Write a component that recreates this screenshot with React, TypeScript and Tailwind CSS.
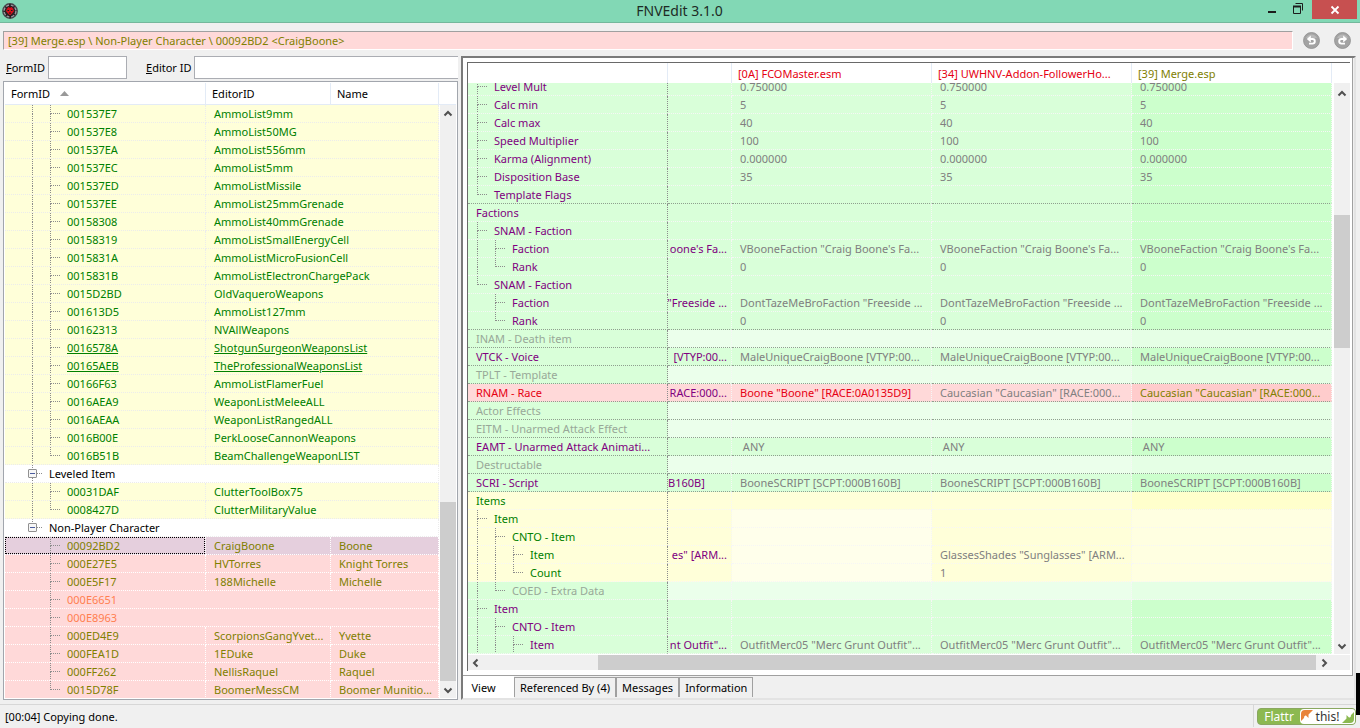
import { clsx } from "clsx";
import type { ReactNode } from "react";

type GuideKind = "none" | "line" | "tee" | "end";

type TreeRow = {
  id: string;
  editor?: string;
  name?: string;
  tone: "added" | "conflict" | "deleted" | "selected" | "group";
  last?: boolean;
  underline?: boolean;
};

const added = (id: string, editor: string, extra: Partial<TreeRow> = {}): TreeRow => ({
  id,
  editor,
  tone: "added",
  ...extra,
});

const conflict = (id: string, editor: string, name: string, extra: Partial<TreeRow> = {}): TreeRow => ({
  id,
  editor,
  name,
  tone: "conflict",
  ...extra,
});

const TREE: TreeRow[] = [
  added("001537E7", "AmmoList9mm"),
  added("001537E8", "AmmoList50MG"),
  added("001537EA", "AmmoList556mm"),
  added("001537EC", "AmmoList5mm"),
  added("001537ED", "AmmoListMissile"),
  added("001537EE", "AmmoList25mmGrenade"),
  added("00158308", "AmmoList40mmGrenade"),
  added("00158319", "AmmoListSmallEnergyCell"),
  added("0015831A", "AmmoListMicroFusionCell"),
  added("0015831B", "AmmoListElectronChargePack"),
  added("0015D2BD", "OldVaqueroWeapons"),
  added("001613D5", "AmmoList127mm"),
  added("00162313", "NVAllWeapons"),
  added("0016578A", "ShotgunSurgeonWeaponsList", { underline: true }),
  added("00165AEB", "TheProfessionalWeaponsList", { underline: true }),
  added("00166F63", "AmmoListFlamerFuel"),
  added("0016AEA9", "WeaponListMeleeALL"),
  added("0016AEAA", "WeaponListRangedALL"),
  added("0016B00E", "PerkLooseCannonWeapons"),
  added("0016B51B", "BeamChallengeWeaponLIST", { last: true }),
  { id: "Leveled Item", tone: "group" },
  added("00031DAF", "ClutterToolBox75"),
  added("0008427D", "ClutterMilitaryValue", { last: true }),
  { id: "Non-Player Character", tone: "group", last: true },
  conflict("00092BD2", "CraigBoone", "Boone", { tone: "selected" }),
  conflict("000E27E5", "HVTorres", "Knight Torres"),
  conflict("000E5F17", "188Michelle", "Michelle"),
  { id: "000E6651", tone: "deleted" },
  { id: "000E8963", tone: "deleted" },
  conflict("000ED4E9", "ScorpionsGangYvet...", "Yvette"),
  conflict("000FEA1D", "1EDuke", "Duke"),
  conflict("000FF262", "NellisRaquel", "Raquel"),
  conflict("0015D78F", "BoomerMessCM", "Boomer Munitio...", { last: true }),
];

const TREE_TONE = {
  added: "bg-[#ffffd9] text-[#008000]",
  conflict: "bg-[#ffd9d9] text-[#808000]",
  deleted: "bg-[#ffd9d9] text-[#ff7f50]",
  selected: "bg-[#e5cfdd] text-[#808000]",
  group: "bg-white text-black",
};

type Fill = "green" | "empty" | "red" | "yellow" | "yellowEmpty";

type RecordRow = {
  label: string;
  guides?: GuideKind[];
  labelFill?: Fill;
  fills?: [Fill, Fill, Fill, Fill];
  tone?: "normal" | "missing" | "red" | "green";
  cells?: [string, string, string, string];
};

const G: [Fill, Fill, Fill, Fill] = ["green", "green", "green", "green"];
const E: [Fill, Fill, Fill, Fill] = ["empty", "empty", "empty", "empty"];
const Y: [Fill, Fill, Fill, Fill] = ["yellow", "yellowEmpty", "yellow", "yellowEmpty"];

const same = (text: string, clipped = ""): [string, string, string, string] => [clipped, text, text, text];

const RECORD: RecordRow[] = [
  { label: "Level Mult", guides: ["tee"], cells: same("0.750000") },
  { label: "Calc min", guides: ["tee"], cells: same("5") },
  { label: "Calc max", guides: ["tee"], cells: same("40") },
  { label: "Speed Multiplier", guides: ["tee"], cells: same("100") },
  { label: "Karma (Alignment)", guides: ["tee"], cells: same("0.000000") },
  { label: "Disposition Base", guides: ["tee"], cells: same("35") },
  { label: "Template Flags", guides: ["end"] },
  { label: "Factions" },
  { label: "SNAM - Faction", guides: ["tee"] },
  {
    label: "Faction",
    guides: ["line", "tee"],
    cells: same("VBooneFaction \"Craig Boone's Fa...", "oone's Fa..."),
  },
  { label: "Rank", guides: ["line", "end"], cells: same("0") },
  { label: "SNAM - Faction", guides: ["end"] },
  {
    label: "Faction",
    guides: ["none", "tee"],
    cells: same("DontTazeMeBroFaction \"Freeside ...", "\"Freeside ..."),
  },
  { label: "Rank", guides: ["none", "end"], cells: same("0") },
  { label: "INAM - Death item", tone: "missing", fills: E },
  { label: "VTCK - Voice", cells: same("MaleUniqueCraigBoone [VTYP:00...", "[VTYP:00...") },
  { label: "TPLT - Template", tone: "missing", fills: E },
  {
    label: "RNAM - Race",
    tone: "red",
    labelFill: "red",
    fills: ["red", "red", "red", "red"],
    cells: [
      "RACE:000...",
      "Boone \"Boone\" [RACE:0A0135D9]",
      "Caucasian \"Caucasian\" [RACE:000...",
      "Caucasian \"Caucasian\" [RACE:000...",
    ],
  },
  { label: "Actor Effects", tone: "missing", fills: E },
  { label: "EITM - Unarmed Attack Effect", tone: "missing", fills: E },
  { label: "EAMT - Unarmed Attack Animati...", cells: same("\u00a0ANY") },
  { label: "Destructable", tone: "missing", fills: E },
  { label: "SCRI - Script", cells: same("BooneSCRIPT [SCPT:000B160B]", "B160B]") },
  { label: "Items", tone: "green", labelFill: "yellow", fills: ["yellow", "yellow", "yellow", "yellow"] },
  { label: "Item", tone: "green", guides: ["tee"], labelFill: "yellow", fills: Y },
  { label: "CNTO - Item", tone: "green", guides: ["line", "tee"], labelFill: "yellow", fills: Y },
  {
    label: "Item",
    tone: "green",
    guides: ["line", "line", "tee"],
    labelFill: "yellow",
    fills: Y,
    cells: ["es\" [ARM...", "", "GlassesShades \"Sunglasses\" [ARM...", ""],
  },
  {
    label: "Count",
    tone: "green",
    guides: ["line", "line", "end"],
    labelFill: "yellow",
    fills: Y,
    cells: ["", "", "1", ""],
  },
  { label: "COED - Extra Data", tone: "missing", guides: ["line", "end"], fills: E },
  { label: "Item", guides: ["tee"] },
  { label: "CNTO - Item", guides: ["line", "tee"] },
  {
    label: "Item",
    guides: ["line", "line", "tee"],
    cells: same("OutfitMerc05 \"Merc Grunt Outfit\"...", "nt Outfit\"..."),
  },
];

const FILL: Record<Fill, string> = {
  green: "bg-[#d9ffd9]",
  empty: "bg-[#ebffeb]",
  red: "bg-[#ffd9d9]",
  yellow: "bg-[#ffffd9]",
  yellowEmpty: "bg-[#ffffeb]",
};

// the last plugin column is a shade darker
const FILL_ACTIVE: Record<Fill, string> = {
  green: "bg-[#ccffcc]",
  empty: "bg-[#e5ffe5]",
  red: "bg-[#ffcccc]",
  yellow: "bg-[#ffffcc]",
  yellowEmpty: "bg-[#ffffe1]",
};

const LABEL_TONE = {
  normal: "text-[#800080]",
  missing: "text-[#98a898]",
  red: "text-[#e60012]",
  green: "text-[#008000]",
};

function Guide({ kind, children }: { kind: GuideKind; children?: ReactNode }) {
  return (
    <span className="relative -mb-px flex h-[18px] w-[18px] shrink-0 flex-col pl-px">
      {kind !== "none" && (
        <>
          <span
            className={clsx(
              "h-[9px] w-[10px] border-l border-dotted border-[#8c8c8c]",
              kind !== "line" && "border-b"
            )}
          />
          {kind !== "end" && <span className="h-[9px] border-l border-dotted border-[#8c8c8c]" />}
        </>
      )}
      {children}
    </span>
  );
}

function Chevron({ dir }: { dir: "up" | "down" | "left" | "right" }) {
  const d = {
    up: "M1.5 6.5 5 3l3.5 3.5",
    down: "M1.5 3.5 5 7l3.5-3.5",
    left: "M6.5 1.5 3 5l3.5 3.5",
    right: "M3.5 1.5 7 5 3.5 8.5",
  }[dir];
  return (
    <svg width="10" height="10" viewBox="0 0 10 10" fill="none" stroke="#505050" strokeWidth="2">
      <path d={d} />
    </svg>
  );
}

function ScrollButton({ dir, label }: { dir: "up" | "down" | "left" | "right"; label: string }) {
  const vertical = dir === "up" || dir === "down";
  return (
    <button
      type="button"
      aria-label={label}
      className={clsx("flex w-4 shrink-0 items-center justify-center", vertical ? "h-[17px]" : "h-[15px]")}
    >
      <Chevron dir={dir} />
    </button>
  );
}

function TreeTable() {
  return (
    <table className="w-full table-fixed border-separate border-spacing-0">
      <colgroup>
        <col className="w-[201px]" />
        <col className="w-[125px]" />
        <col />
      </colgroup>
      <tbody>
        {TREE.map((row) => {
          const inset = row.tone === "conflict" || row.tone === "selected" || row.tone === "deleted";
          const cell = clsx(
            "h-[18px] overflow-hidden border-b border-r border-dotted p-0 whitespace-nowrap",
            inset ? "border-white" : "border-[#ececec]"
          );
          const group = row.tone === "group";
          return (
            <tr key={row.id} className={clsx(TREE_TONE[row.tone], row.underline && "underline")}>
              <td colSpan={row.editor ? 1 : 3} className={cell}>
                <div
                  className={clsx(
                    "flex h-[17px] items-center pl-[26px]",
                    row.tone === "selected" && "outline-1 -outline-offset-1 outline-dotted outline-black"
                  )}
                >
                  {group ? (
                    <Guide kind={row.last ? "end" : "tee"}>
                      <button
                        type="button"
                        aria-label={`Collapse ${row.id}`}
                        className="absolute top-1 -left-[3px] flex h-[9px] w-[9px] items-center justify-center rounded-[1px] border border-[#919191] bg-[#f6f6f6]"
                      >
                        <span className="h-px w-[5px] bg-[#4b5c9e]" />
                      </button>
                    </Guide>
                  ) : (
                    <>
                      <Guide kind={inset ? "none" : "line"} />
                      <Guide kind={row.last ? "end" : "tee"} />
                    </>
                  )}
                  <span>{row.id}</span>
                </div>
              </td>
              {row.editor && (
                <td colSpan={row.name ? 1 : 2} className={clsx(cell, "pl-2")}>
                  {row.editor}
                </td>
              )}
              {row.name && <td className={clsx(cell, "pl-2")}>{row.name}</td>}
            </tr>
          );
        })}
      </tbody>
    </table>
  );
}

function RecordTable() {
  return (
    <table className="-mt-[5px] w-full table-fixed border-separate border-spacing-0">
      <colgroup>
        <col className="w-[200px]" />
        <col className="w-16" />
        <col />
        <col />
        <col />
      </colgroup>
      <tbody>
        {RECORD.map((row, i) => {
          const next = RECORD[i + 1];
          const line = next && !next.guides ? "border-b-[#8fa08f]" : "border-b-[#f6f6f6]";
          const base = clsx("h-[18px] overflow-hidden border-b border-r border-dotted p-0 whitespace-nowrap", line);
          const fills = row.fills ?? G;
          const tone = row.tone ?? "normal";
          return (
            <tr key={i}>
              <td className={clsx(base, "border-r-[#8c8c8c]", FILL[row.labelFill ?? "green"], LABEL_TONE[tone])}>
                <div className="flex h-[17px] items-center pl-2">
                  {row.guides?.map((kind, k) => <Guide key={k} kind={kind} />)}
                  <span>{row.label}</span>
                </div>
              </td>
              {fills.map((fill, c) => {
                const text = row.cells?.[c] ?? "";
                const active = c === 3;
                return (
                  <td
                    key={c}
                    className={clsx(
                      base,
                      "border-r-[#f6f6f6]",
                      active ? FILL_ACTIVE[fill] : FILL[fill],
                      c === 0 && "text-[#800080]",
                      c > 0 && !(tone === "red" && c !== 2) && "text-[#808080]",
                      tone === "red" && c === 1 && "text-[#e60012]",
                      tone === "red" && active && "text-[#808000]"
                    )}
                  >
                    {c === 0 ? (
                      <div className={clsx("flex", text.endsWith("...") && "justify-end pr-1")}>
                        <span className="shrink-0">{text}</span>
                      </div>
                    ) : (
                      <span className="pl-2">{text}</span>
                    )}
                  </td>
                );
              })}
            </tr>
          );
        })}
      </tbody>
    </table>
  );
}

function TitleBar() {
  return (
    <header className="flex h-[23px] shrink-0 items-start border-b border-[#74b89c] bg-[#82d8b5]">
      <div className="flex flex-1 pt-[3px] pl-[2px]">
        <svg width="16" height="16" viewBox="0 0 16 16">
          <circle cx="8" cy="8" r="7.2" fill="#2a2224" stroke="#45454a" strokeWidth="1.4" />
          <circle cx="8" cy="8" r="5.9" fill="none" stroke="#9c9ca2" strokeWidth="1.3" strokeDasharray="3.2 1.4" />
          <path d="M5 5.5 6.5 4h3L11 5.5l1 2.5-1.5 2L8 12.500 5.500 10 4 8z" fill="#d3111c" />
          <path d="M8 1v4M8 12v3M5.500 7.500h1.500M9 7.500h1.500M7 10h2" stroke="#1c1516" strokeWidth="1" />
        </svg>
      </div>
      <h1 className="text-[14px] leading-[22px] text-[#1d2b25]">FNVEdit 3.1.0</h1>
      <div className="flex flex-1 justify-end pr-[3px]">
        <button type="button" aria-label="Minimize" className="flex h-[18px] w-[26px] items-center justify-center">
          <svg width="12" height="12" viewBox="0 0 12 12">
            <path d="M2 8h8v2H2z" fill="#1c1c1c" />
          </svg>
        </button>
        <button type="button" aria-label="Restore" className="flex h-[18px] w-[26px] items-center justify-center">
          <svg width="12" height="12" viewBox="0 0 12 12" fill="none" stroke="#1c1c1c">
            <path d="M3.500.5h7v7" />
            <path d="M1.500 3.500h7v7h-7z" />
            <path d="M1 3.500h8" strokeWidth="2" />
          </svg>
        </button>
        <button
          type="button"
          aria-label="Close"
          className="ml-px flex h-[19px] w-[45px] items-center justify-center bg-[#c75050]"
        >
          <svg width="10" height="10" viewBox="0 0 10 10" stroke="#fff" strokeWidth="1.8">
            <path d="M1.500 1.500l7 7M8.500 1.500l-7 7" />
          </svg>
        </button>
      </div>
    </header>
  );
}

function NavButton({ label, flip }: { label: string; flip?: boolean }) {
  return (
    <button type="button" aria-label={label}>
      <svg width="17" height="17" viewBox="0 0 17 17" className={flip ? "-scale-x-100" : undefined}>
        <circle cx="8.5" cy="8.5" r="8" fill="#a3a3a3" stroke="#8f8f8f" strokeWidth=".8" />
        <path d="M3 6a6 6 0 0 1 11 0z" fill="#b8b8b8" />
        <path d="M6.500 7h3a2.300 2.300 0 0 1 0 4.600H6" fill="none" stroke="#fff" strokeWidth="1.9" />
        <path d="M7.800 3.600v6.800L3.800 7z" fill="#fff" />
      </svg>
    </button>
  );
}

function FlattrButton() {
  return (
    <button
      type="button"
      className="flex h-[17px] w-[99px] overflow-hidden rounded-[4px] border border-[#8aa860] bg-[#8cb951] text-[12px] leading-[15px]"
    >
      <span className="flex-1 text-center text-white">Flattr</span>
      <span className="flex w-[55px] items-center justify-between rounded-l-[4px] bg-white text-[#333]">
        <svg width="13" height="15" viewBox="0 0 13 15">
          <path d="M1 12V5q0-4 4-4h8L8.500 5.500V9L6 6.500Q4 6 4 9z" fill="#e8833a" />
        </svg>
        <span>this!</span>
        <svg width="13" height="15" viewBox="0 0 13 15">
          <path d="M12 3v7q0 4-4 4H0l4.500-4.500V6L7 8.500Q9 9 9 6z" fill="#8cb951" />
        </svg>
      </span>
    </button>
  );
}

const TABS = ["Referenced By (4)", "Messages", "Information"];

const headCell = "border-r border-[#e3ebf6] p-0 text-left font-normal whitespace-nowrap overflow-hidden";

export default function App() {
  return (
    <div className="relative flex h-screen flex-col overflow-hidden bg-[#f0f0f0] font-['Noto_Sans','Open_Sans',sans-serif] text-[11px] leading-[17px] text-black">
      <TitleBar />

      <div className="flex h-[33px] shrink-0 items-center gap-[10px] pt-[2px] pr-[9px] pl-[3px]">
        <input
          readOnly
          aria-label="Record path"
          value="[39] Merge.esp \ Non-Player Character \ 00092BD2 <CraigBoone>"
          className="h-[19px] min-w-0 flex-1 border border-t-[#a0a0a0] border-r-white border-b-white border-l-[#a0a0a0] bg-[#ffd9d9] px-1 text-[#808000] outline-none"
        />
        <div className="flex gap-[14px]">
          <NavButton label="Back" />
          <NavButton label="Forward" flip />
        </div>
      </div>

      <main className="flex min-h-0 flex-1 pr-1 pb-1">
        <section className="flex w-[461px] shrink-0 flex-col pr-[3px] pl-[3px]">
          <div className="flex h-[25px] items-start">
            <label htmlFor="form-id" className="w-[45px] pl-[3px] leading-[24px]">
              <u>F</u>ormID
            </label>
            <input id="form-id" className="h-[23px] w-[79px] border border-[#abadb3] bg-white px-1 outline-none" />
            <label htmlFor="editor-id" className="ml-[19px] w-12 leading-[24px]">
              <u>E</u>ditor ID
            </label>
            <input
              id="editor-id"
              className="h-[23px] min-w-0 flex-1 border border-r-0 border-[#abadb3] bg-white px-1 outline-none"
            />
          </div>

          <div className="flex min-h-0 flex-1 flex-col border border-[#a2a6ad] bg-white p-px">
            <table className="w-full shrink-0 table-fixed border-separate border-spacing-0">
              <colgroup>
                <col className="w-[201px]" />
                <col className="w-[125px]" />
                <col className="w-[108px]" />
                <col />
              </colgroup>
              <thead>
                <tr>
                  <th className={clsx(headCell, "h-[22px] border-b pl-[6px]")}>
                    <span className="flex items-center gap-[10px]">
                      FormID
                      <svg width="9" height="5" viewBox="0 0 9 5">
                        <path d="M0 5 4.500 0 9 5z" fill="#999" />
                      </svg>
                    </span>
                  </th>
                  <th className={clsx(headCell, "border-b pl-[6px]")}>EditorID</th>
                  <th className={clsx(headCell, "border-b pl-[6px]")}>Name</th>
                  <td className="border-b border-[#e3ebf6] p-0" />
                </tr>
              </thead>
            </table>
            <div className="flex min-h-0 flex-1">
              <div className="min-w-0 flex-1 overflow-hidden">
                <TreeTable />
              </div>
              <div className="ml-px flex w-4 flex-col bg-[#f0f0f0]">
                <ScrollButton dir="up" label="Scroll up" />
                <div className="flex flex-1 flex-col">
                  <div className="grow-[381]" />
                  <div className="grow-[180] bg-[#cdcdcd]" />
                </div>
                <ScrollButton dir="down" label="Scroll down" />
              </div>
            </div>
          </div>
        </section>

        <section className="flex min-w-0 flex-1 flex-col border-2 border-t-[#7a7a7a] border-r-[#e3e3e3] border-b-[#e3e3e3] border-l-[#7a7a7a]">
          <div className="mr-px flex min-h-0 flex-1 flex-col border-r border-b border-[#a0a0a0] bg-white pt-1 pr-[2px] pb-1 pl-1">
            <div className="flex min-h-0 flex-1 flex-col border-t border-l border-[#696969]">
              <table className="w-full shrink-0 table-fixed border-separate border-spacing-0">
                <colgroup>
                  <col className="w-[200px]" />
                  <col className="w-16" />
                  <col />
                  <col />
                  <col />
                  <col className="w-[18px]" />
                </colgroup>
                <thead>
                  <tr>
                    <td className={clsx(headCell, "h-5")} />
                    <td className={headCell} />
                    <th className={clsx(headCell, "pl-[6px] text-[#e60012]")}>[0A] FCOMaster.esm</th>
                    <th className={clsx(headCell, "pl-[6px] text-[#e60012]")}>[34] UWHNV-Addon-FollowerHo...</th>
                    <th className={clsx(headCell, "pl-[6px] text-[#808000]")}>[39] Merge.esp</th>
                    <td className="p-0" />
                  </tr>
                </thead>
              </table>
              <div className="flex min-h-0 flex-1">
                <div className="min-w-0 flex-1 overflow-hidden">
                  <RecordTable />
                </div>
                <div className="ml-[2px] flex w-4 flex-col bg-[#f0f0f0] pt-[2px]">
                  <ScrollButton dir="up" label="Scroll record up" />
                  <div className="flex flex-1 flex-col">
                    <div className="grow-[113]" />
                    <div className="grow-[133] bg-[#cdcdcd]" />
                    <div className="grow-[288]" />
                  </div>
                  <ScrollButton dir="down" label="Scroll record down" />
                </div>
              </div>
              <div className="mt-px mb-px flex h-[15px] shrink-0 bg-[#f0f0f0]">
                <ScrollButton dir="left" label="Scroll record left" />
                <div className="flex flex-1">
                  <div className="grow-[114]" />
                  <div className="grow-[718] bg-[#cdcdcd]" />
                </div>
                <ScrollButton dir="right" label="Scroll record right" />
                <div className="w-[18px]" />
              </div>
            </div>
          </div>

          <div role="tablist" className="flex h-[22px] shrink-0 items-start">
            <button type="button" role="tab" aria-selected className="h-[22px] w-[51px] bg-white pt-px pr-[10px]">
              View
            </button>
            {TABS.map((tab) => (
              <button
                key={tab}
                type="button"
                role="tab"
                aria-selected={false}
                className="mt-px h-[20px] border-t border-r border-l border-[#a0a0a0] px-[5px] pb-px whitespace-nowrap"
              >
                {tab}
              </button>
            ))}
          </div>
        </section>
      </main>

      <footer className="flex h-6 shrink-0 items-center justify-between border-t border-[#d7d7d7] pr-1 pb-px pl-[5px]">
        <span>[00:04] Copying done.</span>
        <div className="flex h-full items-center border-l border-[#d7d7d7] pl-[3px]">
          <FlattrButton />
        </div>
      </footer>

      <div className="absolute right-0 bottom-[13px] h-[42px] w-1 bg-black" />
    </div>
  );
}
